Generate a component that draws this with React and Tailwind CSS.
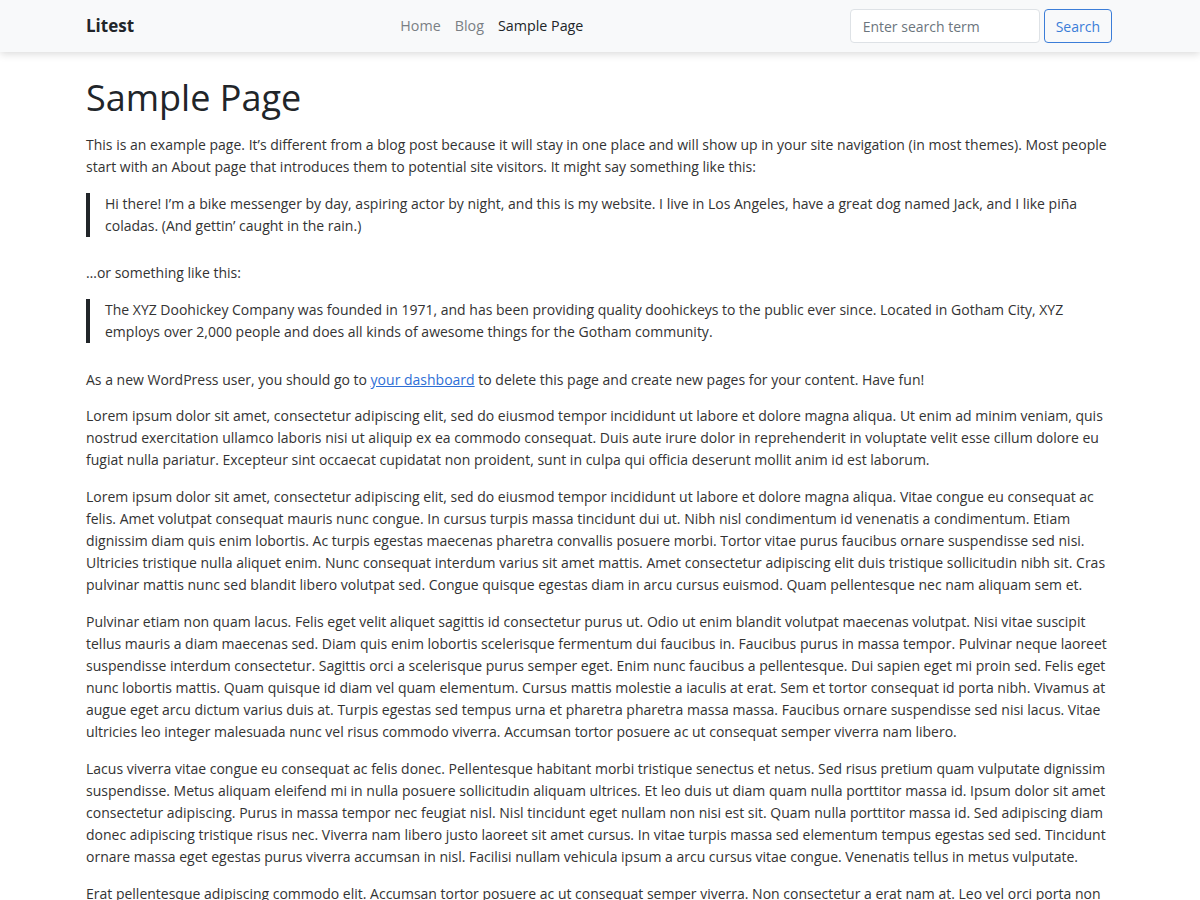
import React from 'react';

const paragraphs = [
  'Lorem ipsum dolor sit amet, consectetur adipiscing elit, sed do eiusmod tempor incididunt ut labore et dolore magna aliqua. Ut enim ad minim veniam, quis nostrud exercitation ullamco laboris nisi ut aliquip ex ea commodo consequat. Duis aute irure dolor in reprehenderit in voluptate velit esse cillum dolore eu fugiat nulla pariatur. Excepteur sint occaecat cupidatat non proident, sunt in culpa qui officia deserunt mollit anim id est laborum.',
  'Lorem ipsum dolor sit amet, consectetur adipiscing elit, sed do eiusmod tempor incididunt ut labore et dolore magna aliqua. Vitae congue eu consequat ac felis. Amet volutpat consequat mauris nunc congue. In cursus turpis massa tincidunt dui ut. Nibh nisl condimentum id venenatis a condimentum. Etiam dignissim diam quis enim lobortis. Ac turpis egestas maecenas pharetra convallis posuere morbi. Tortor vitae purus faucibus ornare suspendisse sed nisi. Ultricies tristique nulla aliquet enim. Nunc consequat interdum varius sit amet mattis. Amet consectetur adipiscing elit duis tristique sollicitudin nibh sit. Cras pulvinar mattis nunc sed blandit libero volutpat sed. Congue quisque egestas diam in arcu cursus euismod. Quam pellentesque nec nam aliquam sem et.',
  'Pulvinar etiam non quam lacus. Felis eget velit aliquet sagittis id consectetur purus ut. Odio ut enim blandit volutpat maecenas volutpat. Nisi vitae suscipit tellus mauris a diam maecenas sed. Diam quis enim lobortis scelerisque fermentum dui faucibus in. Faucibus purus in massa tempor. Pulvinar neque laoreet suspendisse interdum consectetur. Sagittis orci a scelerisque purus semper eget. Enim nunc faucibus a pellentesque. Dui sapien eget mi proin sed. Felis eget nunc lobortis mattis. Quam quisque id diam vel quam elementum. Cursus mattis molestie a iaculis at erat. Sem et tortor consequat id porta nibh. Vivamus at augue eget arcu dictum varius duis at. Turpis egestas sed tempus urna et pharetra pharetra massa massa. Faucibus ornare suspendisse sed nisi lacus. Vitae ultricies leo integer malesuada nunc vel risus commodo viverra. Accumsan tortor posuere ac ut consequat semper viverra nam libero.',
  'Lacus viverra vitae congue eu consequat ac felis donec. Pellentesque habitant morbi tristique senectus et netus. Sed risus pretium quam vulputate dignissim suspendisse. Metus aliquam eleifend mi in nulla posuere sollicitudin aliquam ultrices. Et leo duis ut diam quam nulla porttitor massa id. Ipsum dolor sit amet consectetur adipiscing. Purus in massa tempor nec feugiat nisl. Nisl tincidunt eget nullam non nisi est sit. Quam nulla porttitor massa id. Sed adipiscing diam donec adipiscing tristique risus nec. Viverra nam libero justo laoreet sit amet cursus. In vitae turpis massa sed elementum tempus egestas sed sed. Tincidunt ornare massa eget egestas purus viverra accumsan in nisl. Facilisi nullam vehicula ipsum a arcu cursus vitae congue. Venenatis tellus in metus vulputate.',
  'Erat pellentesque adipiscing commodo elit. Accumsan tortor posuere ac ut consequat semper viverra. Non consectetur a erat nam at. Leo vel orci porta non pulvinar neque laoreet suspendisse interdum. Sit amet nisl suscipit adipiscing bibendum est ultricies integer quis.',
];

export default function App() {
  return (
    <div className="min-h-screen bg-white text-[#212529]" style={{ fontFamily: "'Segoe UI', 'Open Sans', 'Noto Sans', sans-serif" }}>
      {/* Navbar */}
      <nav className="bg-[#f8f9fa] shadow-[0_2px_8px_rgba(0,0,0,0.15)] relative z-10">
        <div className="mx-auto max-w-[1028px] h-[52px] flex items-center justify-between">
          <a className="text-[17px] font-bold text-[#212529]">Litest</a>
          <ul className="flex items-center gap-[14px] text-[14.3px]">
            <li className="text-[#7a7f84]">Home</li>
            <li className="text-[#7a7f84]">Blog</li>
            <li className="text-[#212529]">Sample Page</li>
          </ul>
          <form className="flex items-center gap-[4px] mr-[2px]">
            <input
              placeholder="Enter search term"
              className="w-[190px] h-[34px] px-[12px] text-[14px] bg-white border border-[#dee2e6] rounded-[4px] placeholder:text-[#6c757d] outline-none"
            />
            <button type="button" className="h-[34px] px-[11px] text-[14px] text-[#3b7dd8] border border-[#3b7dd8] rounded-[4px]">
              Search
            </button>
          </form>
        </div>
      </nav>

      {/* Content */}
      <main className="mx-auto max-w-[1028px] pt-[24px] text-[14px] leading-[22px] text-[#333]">
        <h1 className="text-[36px] leading-[44px] font-medium text-[#212529] mb-[14px]">Sample Page</h1>
        <p className="mb-[15px]">
          This is an example page. It’s different from a blog post because it will stay in one place and will show up in your site navigation (in most themes). Most people start with an About page that introduces them to potential site visitors. It might say something like this:
        </p>
        <blockquote className="border-l-4 border-[#212529] pl-[15px] mb-[25px]">
          <p>Hi there! I’m a bike messenger by day, aspiring actor by night, and this is my website. I live in Los Angeles, have a great dog named Jack, and I like piña coladas. (And gettin’ caught in the rain.)</p>
        </blockquote>
        <p className="mb-[15px]">…or something like this:</p>
        <blockquote className="border-l-4 border-[#212529] pl-[15px] mb-[26px]">
          <p>The XYZ Doohickey Company was founded in 1971, and has been providing quality doohickeys to the public ever since. Located in Gotham City, XYZ employs over 2,000 people and does all kinds of awesome things for the Gotham community.</p>
        </blockquote>
        <p className="mb-[14px]">
          As a new WordPress user, you should go to <a className="text-[#2f6fd6] underline">your dashboard</a> to delete this page and create new pages for your content. Have fun!
        </p>
        {paragraphs.map((text, i) => (
          <p key={i} className="mb-[15px]">{text}</p>
        ))}
      </main>
    </div>
  );
}
